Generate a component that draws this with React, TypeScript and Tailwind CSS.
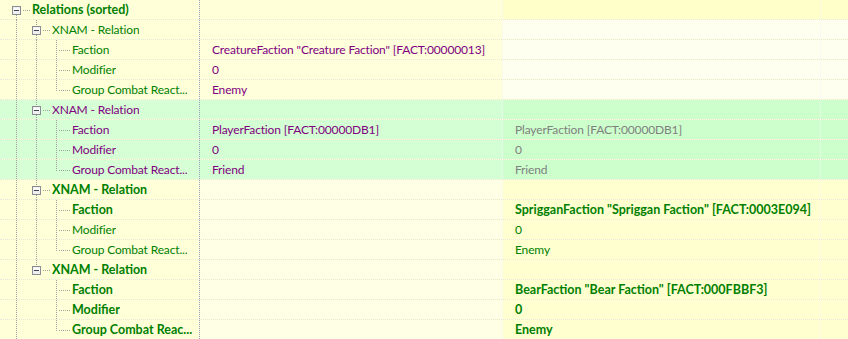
import React from 'react';

type Tone = 'g' | 'gb' | 'p' | 'gray';

const reg = 'text-[12px] tracking-[-0.15px]';
const bold = 'text-[12.5px] font-bold';

const tone: Record<Tone, string> = {
  g: `text-[#008000] ${reg}`,
  gb: `text-[#008000] ${bold}`,
  p: `text-[#800080] ${reg}`,
  gray: `text-[#808080] ${reg}`,
};

type Bg = { c1: string; c2: string; c3: string };

const bgTop: Bg = { c1: 'bg-[#ffffd8]', c2: 'bg-[#ffffd8]', c3: 'bg-[#ffffc9]' };
const bgA: Bg = { c1: 'bg-[#ffffd8]', c2: 'bg-[#ffffdc]', c3: 'bg-[#fffff0]' };
const bgG: Bg = { c1: 'bg-[#d6ffd6]', c2: 'bg-[#d4ffd4]', c3: 'bg-[#ccffcc]' };
const bgB: Bg = { c1: 'bg-[#ffffd8]', c2: 'bg-[#ffffe6]', c3: 'bg-[#ffffd0]' };

type Row = {
  level: number;
  label: string;
  t: Tone;
  bg: Bg;
  box?: boolean;
  last?: boolean;
  anc: boolean[];
  c2?: string;
  t2?: Tone;
  c3?: string;
  t3?: Tone;
};

const rows: Row[] = [
  { level: 0, label: 'Relations (sorted)', t: 'gb', bg: bgTop, box: true, anc: [] },
  { level: 1, label: 'XNAM - Relation', t: 'g', bg: bgA, box: true, anc: [true] },
  { level: 2, label: 'Faction', t: 'g', bg: bgA, anc: [true, true], c2: 'CreatureFaction "Creature Faction" [FACT:00000013]', t2: 'p' },
  { level: 2, label: 'Modifier', t: 'g', bg: bgA, anc: [true, true], c2: '0', t2: 'p' },
  { level: 2, label: 'Group Combat React...', t: 'g', bg: bgA, last: true, anc: [true, true], c2: 'Enemy', t2: 'p' },
  { level: 1, label: 'XNAM - Relation', t: 'p', bg: bgG, box: true, anc: [true] },
  { level: 2, label: 'Faction', t: 'p', bg: bgG, anc: [true, true], c2: 'PlayerFaction [FACT:00000DB1]', t2: 'p', c3: 'PlayerFaction [FACT:00000DB1]', t3: 'gray' },
  { level: 2, label: 'Modifier', t: 'p', bg: bgG, anc: [true, true], c2: '0', t2: 'p', c3: '0', t3: 'gray' },
  { level: 2, label: 'Group Combat React...', t: 'p', bg: bgG, last: true, anc: [true, true], c2: 'Friend', t2: 'p', c3: 'Friend', t3: 'gray' },
  { level: 1, label: 'XNAM - Relation', t: 'gb', bg: bgB, box: true, anc: [true] },
  { level: 2, label: 'Faction', t: 'gb', bg: bgB, anc: [true, true], c3: 'SprigganFaction "Spriggan Faction" [FACT:0003E094]', t3: 'gb' },
  { level: 2, label: 'Modifier', t: 'g', bg: bgB, anc: [true, true], c3: '0', t3: 'g' },
  { level: 2, label: 'Group Combat React...', t: 'g', bg: bgB, last: true, anc: [true, true], c3: 'Enemy', t3: 'g' },
  { level: 1, label: 'XNAM - Relation', t: 'gb', bg: bgB, box: true, last: true, anc: [true] },
  { level: 2, label: 'Faction', t: 'gb', bg: bgB, anc: [true, false], c3: 'BearFaction "Bear Faction" [FACT:000FBBF3]', t3: 'gb' },
  { level: 2, label: 'Modifier', t: 'gb', bg: bgB, anc: [true, false], c3: '0', t3: 'gb' },
  { level: 2, label: 'Group Combat Reac...', t: 'gb', bg: bgB, last: true, anc: [true, false], c3: 'Enemy', t3: 'gb' },
];

const LINE = '#a0a0a0';

function TreeLines({ row, first }: { row: Row; first: boolean }) {
  const w = 32 + row.level * 20;
  const x0 = 16 + row.level * 20 + 0.5;
  return (
    <svg width={w} height={20} className="shrink-0" shapeRendering="crispEdges">
      {row.anc.map((on, l) =>
        on ? <line key={l} x1={16 + l * 20 + 0.5} y1={0} x2={16 + l * 20 + 0.5} y2={20} stroke={LINE} strokeDasharray="1 1" /> : null
      )}
      {row.box ? (
        <g>
          {!first && <line x1={x0} y1={0} x2={x0} y2={6} stroke={LINE} strokeDasharray="1 1" />}
          {!row.last && <line x1={x0} y1={15} x2={x0} y2={20} stroke={LINE} strokeDasharray="1 1" />}
          <line x1={x0 + 6} y1={10.5} x2={x0 + 14} y2={10.5} stroke={LINE} strokeDasharray="1 1" />
          <rect x={x0 - 4} y={6.5} width={8} height={8} fill="#efefef" stroke="#8a8d94" />
          <rect x={x0 - 3} y={7.5} width={6} height={3} fill="#fbfbfb" />
          <rect x={x0 - 2.5} y={10} width={5} height={1} fill="#3d4452" />
        </g>
      ) : (
        <g>
          <line x1={x0} y1={0} x2={x0} y2={row.last ? 11 : 20} stroke={LINE} strokeDasharray="1 1" />
          <line x1={x0 + 2} y1={10.5} x2={x0 + 14} y2={10.5} stroke={LINE} strokeDasharray="1 1" />
        </g>
      )}
    </svg>
  );
}

export default function App() {
  return (
    <div className="w-[848px] h-[339px] overflow-hidden bg-[#ffffd0] leading-[19px] font-['Lato','Open_Sans',sans-serif]">
      {rows.map((r, i) => (
        <div key={i} className="flex h-5 border-b border-dotted border-[#e6e6e2]">
          <div className={`flex w-[200px] shrink-0 border-r border-dotted border-[#9c9cc0] ${r.bg.c1}`}>
            <TreeLines row={r} first={i === 0} />
            <span className={`whitespace-nowrap overflow-hidden ${tone[r.t]}`}>{r.label}</span>
          </div>
          <div className={`w-[303px] shrink-0 pl-3 whitespace-nowrap overflow-hidden border-r border-dotted border-[#f4f4f4] ${r.bg.c2} ${r.t2 ? tone[r.t2] : ''}`}>
            {r.c2}
          </div>
          <div className={`w-[318px] shrink-0 pl-3 whitespace-nowrap overflow-hidden border-r border-dotted border-[#f4f4f4] ${r.bg.c3} ${r.t3 ? tone[r.t3] : ''}`}>
            {r.c3}
          </div>
          <div className={`flex-1 ${r.bg.c3}`} />
        </div>
      ))}
    </div>
  );
}
